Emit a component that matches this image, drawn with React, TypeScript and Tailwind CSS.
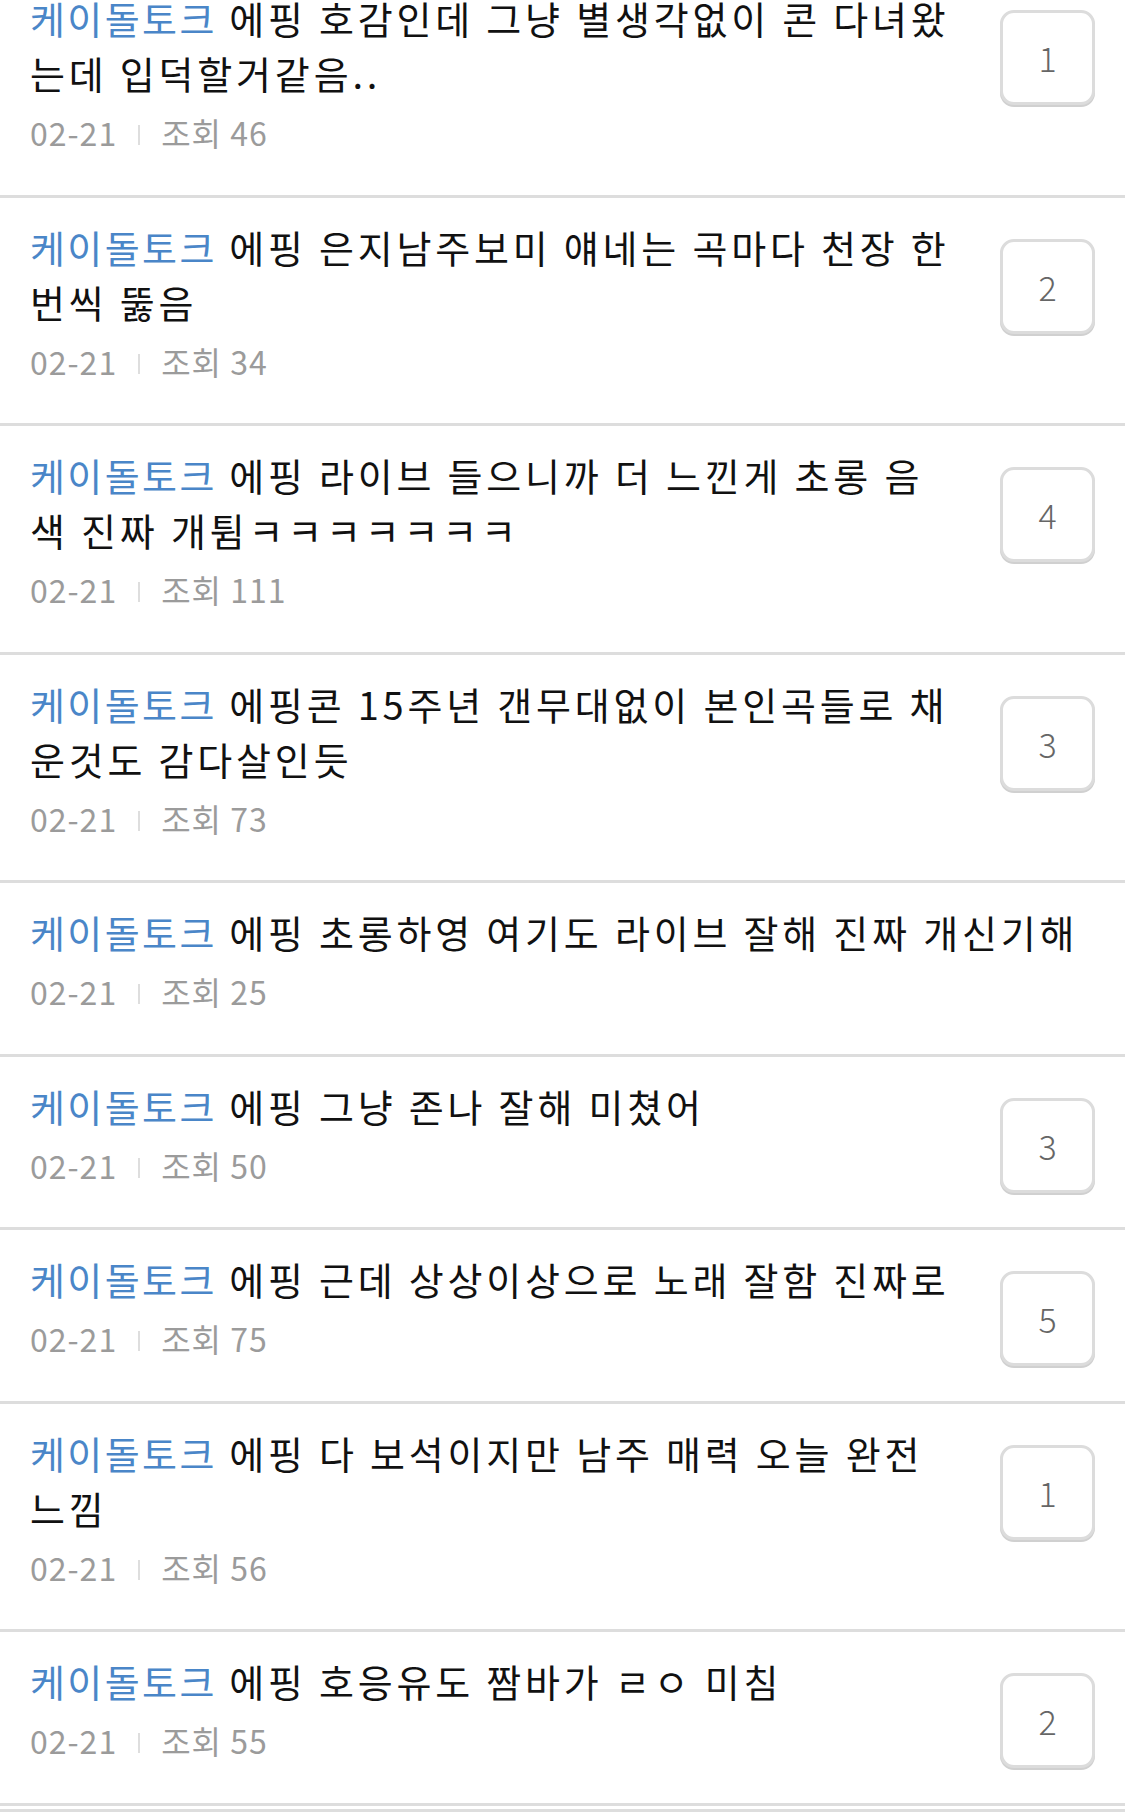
import React from "react";

type Post = {
  lines: string[];
  views: number;
  comments?: number;
};

// first line always starts with the blue board name
const posts: Post[] = [
  { lines: ["에핑 호감인데 그냥 별생각없이 콘 다녀왔", "는데 입덕할거같음.."], views: 46, comments: 1 },
  { lines: ["에핑 은지남주보미 얘네는 곡마다 천장 한", "번씩 뚫음"], views: 34, comments: 2 },
  { lines: ["에핑 라이브 들으니까 더 느낀게 초롱 음", "색 진짜 개튐ㅋㅋㅋㅋㅋㅋㅋ"], views: 111, comments: 4 },
  { lines: ["에핑콘 15주년 갠무대없이 본인곡들로 채", "운것도 감다살인듯"], views: 73, comments: 3 },
  { lines: ["에핑 초롱하영 여기도 라이브 잘해 진짜 개신기해"], views: 25 },
  { lines: ["에핑 그냥 존나 잘해 미쳤어"], views: 50, comments: 3 },
  { lines: ["에핑 근데 상상이상으로 노래 잘함 진짜로"], views: 75, comments: 5 },
  { lines: ["에핑 다 보석이지만 남주 매력 오늘 완전", "느낌"], views: 56, comments: 1 },
  { lines: ["에핑 호응유도 짬바가 ㄹㅇ 미침"], views: 55, comments: 2 },
];

function PostRow({ post }: { post: Post }) {
  return (
    <div className="flex items-start border-b-[3px] border-[#dddddd] pl-[30px] pr-[30px] pt-[21px] pb-[42.5px]">
      <div className="flex-1 min-w-0">
        <div className="text-[38px] leading-[55px] tracking-[3.8px] text-[#111111] [word-spacing:0px]">
          {post.lines.map((line, i) => (
            <p key={i} className="whitespace-nowrap">
              {i === 0 && <span className="tracking-[2.4px] text-[#4a86c8]">케이돌토크</span>}
              {i === 0 && " "}
              {line}
            </p>
          ))}
        </div>
        <div className="mt-[12px] flex items-center text-[32px] leading-[40px] tracking-[1px] text-[#9b9b9b]">
          <span>02-21</span>
          <span className="mx-[21px] mt-[6px] inline-block h-[20px] w-[2px] bg-[#dedede]" />
          <span>조회 {post.views}</span>
        </div>
      </div>
      {post.comments !== undefined && (
        <div className="ml-[20px] mt-[20px] -mb-[12px] flex h-[95px] w-[95px] shrink-0 items-center justify-center rounded-[14px] border-[3px] border-[#dcdcdc] bg-white text-[34px] font-light text-[#666666] shadow-[0_2px_0_#d0d0d0]">
          {post.comments}
        </div>
      )}
    </div>
  );
}

export default function App() {
  return (
    <div
      className="w-[1125px] h-[1820px] overflow-hidden bg-white"
      style={{ fontFamily: '"Noto Sans CJK KR", "Noto Sans", sans-serif' }}
    >
      <div className="-mt-[31px]">
        {posts.map((post, i) => (
          <PostRow key={i} post={post} />
        ))}
        <div className="mt-[3px] h-[3px] bg-[#dddddd]" />
      </div>
    </div>
  );
}
